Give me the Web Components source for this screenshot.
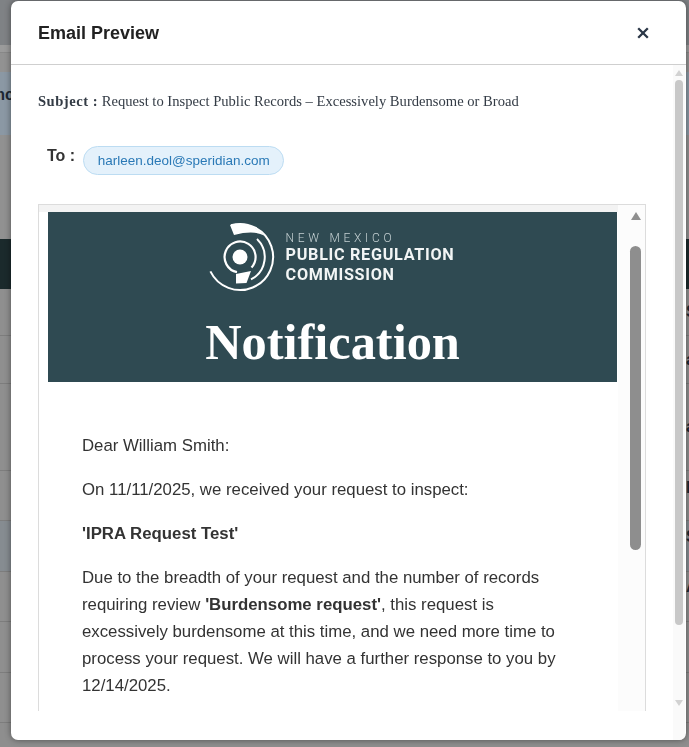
<!DOCTYPE html>
<html lang="en"><head><meta charset="utf-8"><title>Email Preview</title>
<style>html,body{margin:0;height:100%;overflow:hidden;background:#8e8e8e}</style></head>
<body>
<bg-page>
  <bg-row h="45" c="#7f8285"></bg-row>
  <bg-row h="8" c="#9b9b9b" line="#888"></bg-row>
  <bg-row h="19" c="#929292"></bg-row>
  <bg-row h="63" c="#8b98a4" left="nc" shift="18"></bg-row>
  <bg-row h="104" c="#919191"></bg-row>
  <bg-row h="50" c="#1b2a2c"></bg-row>
  <bg-row h="47" c="#8f8f8f" line="#7d7d7d" right="S"></bg-row>
  <bg-row h="48" c="#8f8f8f" line="#7d7d7d" right="a"></bg-row>
  <bg-row h="87" c="#8f8f8f" line="#7d7d7d" right="a"></bg-row>
  <bg-row h="50" c="#8f8f8f" line="#7d7d7d" right="D" shift="16"></bg-row>
  <bg-row h="51" c="#868c91" line="#7d7d7d" right="S" shift="18"></bg-row>
  <bg-row h="50" c="#8f8f8f" line="#7d7d7d" right="A" shift="20"></bg-row>
  <bg-row h="51" c="#8f8f8f" line="#7d7d7d"></bg-row>
  <bg-row h="50" c="#8f8f8f" line="#7d7d7d"></bg-row>
</bg-page>
<email-modal heading="Email Preview">
  <subject-line label="Subject :">Request to Inspect Public Records – Excessively Burdensome or Broad</subject-line>
  <to-line label="To :"><email-chip>harleen.deol@speridian.com</email-chip></to-line>
  <email-frame>
    <prc-banner></prc-banner>
    <email-letter>
      <p>Dear William Smith:</p>
      <p>On 11/11/2025, we received your request to inspect:</p>
      <p><b>'IPRA Request Test'</b></p>
      <p>Due to the breadth of your request and the number of records requiring review <b>'Burdensome request'</b>, this request is excessively burdensome at this time, and we need more time to process your request. We will have a further response to you by 12/14/2025.</p>
    </email-letter>
  </email-frame>
</email-modal>
<script>
function def(name, html, init){
  customElements.define(name, class extends HTMLElement{
    connectedCallback(){
      if(this.shadowRoot) return;
      const r=this.attachShadow({mode:'open'});
      r.innerHTML=html;
      if(init) init(this,r);
    }
  });
}
def('bg-page',`<style>:host{display:flex;flex-direction:column;height:747px;overflow:hidden;font:bold 16px "Liberation Sans",sans-serif;color:#1c2733}</style><slot></slot>`);
def('bg-row',`<style>:host{display:flex;justify-content:space-between;align-items:center;box-sizing:border-box;flex:none}
.l{width:14px;overflow:hidden;direction:rtl;white-space:nowrap}.r{width:3px;overflow:hidden;white-space:nowrap}</style><div class="l"></div><div class="r"></div>`,(h,r)=>{
  h.style.height=h.getAttribute('h')+'px';
  h.style.background=h.getAttribute('c');
  if(h.getAttribute('line')) h.style.borderBottom='1px solid '+h.getAttribute('line');
  if(h.getAttribute('shift')) h.style.paddingBottom=h.getAttribute('shift')+'px';
  r.querySelector('.l').textContent=h.getAttribute('left')||'';
  r.querySelector('.r').textContent=h.getAttribute('right')||'';
});
def('fake-scrollbar',`<style>:host{display:flex;flex-direction:column;align-items:center;background:var(--track,#fafafa);flex:none;box-sizing:border-box;width:var(--w,12px);padding-left:var(--pl,0)}
.a{flex:none;width:0;height:0;border-left:var(--aw,4px) solid transparent;border-right:var(--aw,4px) solid transparent}
.u{border-bottom:var(--ah,6px) solid var(--arrow,#d2d2d2);margin-top:var(--top,5px)}
.d{border-top:6px solid #d2d2d2;margin-top:var(--dgap,75px);display:var(--ddisp,block)}
.t{flex:none;width:var(--tw,8px);height:var(--th,545px);margin-top:var(--tgap,4px);background:var(--thumb,#c8c8c8);border-radius:6px}</style>
<div class="a u"></div><div class="t"></div><div class="a d"></div>`);
def('email-modal',`<style>:host{display:flex;flex-direction:column;position:fixed;left:11px;top:1px;width:675px;height:739px;background:#fff;border-radius:7px;box-shadow:0 0 6px rgba(0,0,0,.45);overflow:hidden;font-family:"Liberation Sans",sans-serif}
header{flex:none;border-bottom:1px solid #cfcfcf;box-sizing:border-box;height:64px;display:flex;align-items:center;justify-content:space-between;padding:1px 37px 0 27px}
h1{margin:0;font:bold 18px "Liberation Sans",sans-serif;color:#222}
svg{display:block}
.body{flex:1;min-height:0;display:flex}
main{flex:1;min-width:0;display:flex;flex-direction:column;padding:0 27px 29px 27px}
fake-scrollbar{--w:12px;margin-right:1px}
</style><header><h1></h1><svg width="12" height="12" viewBox="0 0 12 12"><path d="M1.200 1.200 10.800 10.800M10.800 1.200 1.200 10.800" stroke="#2b3747" stroke-width="2.300" fill="none"/></svg></header>
<div class="body"><main><slot></slot></main><fake-scrollbar></fake-scrollbar></div>`,(h,r)=>{r.querySelector('h1').textContent=h.getAttribute('heading')});
def('subject-line',`<style>:host{display:block;flex:none;padding-top:28px;font:14.6px "Liberation Serif",serif;color:#333b45;line-height:17px}b{letter-spacing:.5px}</style><b></b> <slot></slot>`,(h,r)=>{r.querySelector('b').textContent=h.getAttribute('label')});
def('to-line',`<style>:host{display:flex;flex:none;align-items:flex-start;gap:8px;padding:36px 0 0 9px;height:29px;margin-bottom:29px;font:bold 16px "Liberation Sans",sans-serif;color:#333}
span{padding-top:1px;line-height:18px}</style><span></span><slot></slot>`,(h,r)=>{r.querySelector('span').textContent=h.getAttribute('label')});
def('email-chip',`<style>:host{display:block;box-sizing:border-box;height:29px;padding:0 13.500px;border:1px solid #bcdcf2;border-radius:15px;background:#e4f1fb;color:#2a79b6;font:13.5px/27px "Liberation Sans",sans-serif}</style><slot></slot>`);
def('email-frame',`<style>:host{display:flex;flex:1;min-height:0;overflow:hidden;border:1px solid #dcdcdc;border-bottom:0;background:#fff}
.c{flex:1;min-width:0;padding:7px 1px 0 9px;background:linear-gradient(#f3f3f3 7px,#fff 7px);overflow:hidden}
fake-scrollbar{--w:27px;--pl:8px;--track:#fcfcfc;--arrow:#8f8f8f;--aw:5px;--ah:8px;--top:7px;--tw:11px;--th:304px;--tgap:26px;--thumb:#8e8e8e;--ddisp:none}
</style><div class="c"><slot></slot></div><fake-scrollbar></fake-scrollbar>`);
def('prc-banner',`<style>:host{display:flex;flex-direction:column;align-items:center;height:170px;background:#2f4a52;color:#fff;box-sizing:border-box;padding-top:9px}
.logo{display:flex;align-items:center;gap:11px;height:72px;margin-left:-6px}
svg{display:block;flex:none}
.t{display:flex;flex-direction:column;font-family:Roboto,"Liberation Sans",sans-serif;white-space:nowrap}
.a{font-size:12px;font-weight:300;letter-spacing:3.7px;color:#c4d0d2;line-height:15px;margin:2px 0 -1px}
.b{font-size:16.2px;font-weight:700;letter-spacing:.7px;line-height:20px;color:#f2f5f5}
h2{margin:24px 0 0;font:bold 50.4px/1 "Liberation Serif",serif}
</style><div class="logo">
<svg width="70" height="72" viewBox="-35 -36 70 72" fill="none" stroke="#fff">
<circle r="7.500" fill="#fff" stroke="none"/>
<path d="M11.500 10.500A15.500 15.500 0 1 0 -3 15.200" stroke-width="2.200"/>
<path d="M-4 17 11 14 6.500 26 -4 26.500Z" fill="#fff" stroke="none"/>
<path d="M17-18A25 25 0 0 1 11 22.400" stroke-width="2"/>
<path d="M-9-31.700A33 33 0 1 1 -29.600 14.400" stroke-width="2"/>
<path d="M-10-32A33 33 0 0 1 24-21.500Q14-27 -6-22Z" fill="#fff" stroke="none"/>
</svg>
<div class="t"><span class="a">NEW MEXICO</span><span class="b">PUBLIC REGULATION</span><span class="b">COMMISSION</span></div>
</div><h2>Notification</h2>`);
def('email-letter',`<style>:host{display:block;padding:50px 50px 0 34px;font:16.8px/27px "Liberation Sans",sans-serif;color:#333}
::slotted(p){margin:0 0 17px}</style><slot></slot>`);
</script>
</body></html>
